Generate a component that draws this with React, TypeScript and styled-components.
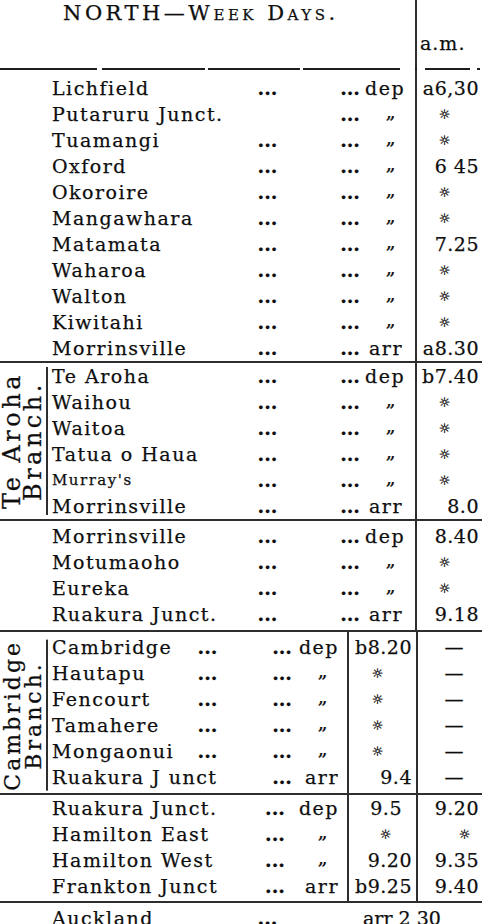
import styled, { createGlobalStyle } from "styled-components";

const GlobalStyle = createGlobalStyle`
  html, body {
    margin: 0;
    padding: 0;
    background: #fff;
  }
`;

type Layout = "main" | "cam" | "ham";

type Stop = {
  name: string;
  d1?: boolean;
  d2?: boolean;
  q: string;
  mid?: string;
  midPad?: number;
  time?: string;
  small?: boolean;
};

const STAR = "*";
const NONE = "—";

const columns: Record<Layout, string> = {
  main: "202px 35px 80px 50px 1fr",
  cam: "142px 35px 70px 52px 70px 1fr",
  ham: "207px 40px 52px 70px 1fr",
};

// where the stop marks sit in each column, as a right margin
const starRight: Record<Layout, { mid: number; time: number }> = {
  main: { mid: 0, time: 28 },
  cam: { mid: 28, time: 28 },
  ham: { mid: 20, time: 8 },
};

const northMain: Stop[] = [
  { name: "Lichfield", d1: true, d2: true, q: "dep", time: "a6,30" },
  { name: "Putaruru Junct.", d2: true, q: "„", time: STAR },
  { name: "Tuamangi", d1: true, d2: true, q: "„", time: STAR },
  { name: "Oxford", d1: true, d2: true, q: "„", time: "6 45" },
  { name: "Okoroire", d1: true, d2: true, q: "„", time: STAR },
  { name: "Mangawhara", d1: true, d2: true, q: "„", time: STAR },
  { name: "Matamata", d1: true, d2: true, q: "„", time: "7.25" },
  { name: "Waharoa", d1: true, d2: true, q: "„", time: STAR },
  { name: "Walton", d1: true, d2: true, q: "„", time: STAR },
  { name: "Kiwitahi", d1: true, d2: true, q: "„", time: STAR },
  { name: "Morrinsville", d1: true, d2: true, q: "arr", time: "a8.30" },
];

const teAroha: Stop[] = [
  { name: "Te Aroha", d1: true, d2: true, q: "dep", time: "b7.40" },
  { name: "Waihou", d1: true, d2: true, q: "„", time: STAR },
  { name: "Waitoa", d1: true, d2: true, q: "„", time: STAR },
  { name: "Tatua o Haua", d1: true, d2: true, q: "„", time: STAR },
  { name: "Murray's", d1: true, d2: true, q: "„", time: STAR, small: true },
  { name: "Morrinsville", d1: true, d2: true, q: "arr", time: "8.0" },
];

const toRuakura: Stop[] = [
  { name: "Morrinsville", d1: true, d2: true, q: "dep", time: "8.40" },
  { name: "Motumaoho", d1: true, d2: true, q: "„", time: STAR },
  { name: "Eureka", d1: true, d2: true, q: "„", time: STAR },
  { name: "Ruakura Junct.", d1: true, d2: true, q: "arr", time: "9.18" },
];

const cambridge: Stop[] = [
  { name: "Cambridge", d1: true, d2: true, q: "dep", mid: "b8.20", time: NONE },
  { name: "Hautapu", d1: true, d2: true, q: "„", mid: STAR, time: NONE },
  { name: "Fencourt", d1: true, d2: true, q: "„", mid: STAR, time: NONE },
  { name: "Tamahere", d1: true, d2: true, q: "„", mid: STAR, time: NONE },
  { name: "Mongaonui", d1: true, d2: true, q: "„", mid: STAR, time: NONE },
  { name: "Ruakura J unct", d2: true, q: "arr", mid: "9.4", time: NONE },
];

const hamilton: Stop[] = [
  { name: "Ruakura Junct.", d1: true, q: "dep", mid: "9.5", midPad: 15, time: "9.20" },
  { name: "Hamilton East", d1: true, q: "„", mid: STAR, time: STAR },
  { name: "Hamilton West", d1: true, q: "„", mid: "9.20", time: "9.35" },
  { name: "Frankton Junct", d1: true, q: "arr", mid: "b9.25", time: "9.40" },
];

// [start, end] of each piece of the broken rule under the heading
const headRule: [number, number][] = [
  [0, 97],
  [102, 205],
  [208, 300],
  [303, 400],
  [415, 417],
  [425, 470],
  [477, 480],
];

const Page = styled.div`
  width: 482px;
  height: 924px;
  overflow: hidden;
  background: #fff;
  color: #0e0e0e;
  font-family: "DejaVu Serif", "Liberation Serif", serif;
  font-size: 19px;
  -webkit-text-stroke: 0.25px #0e0e0e;
`;

const Header = styled.header`
  display: grid;
  grid-template-columns: 415px 1fr;
  height: 68px;
`;

const Title = styled.h1`
  margin: 0;
  padding: 1px 0 0 63px;
  font-size: 21px;
  font-weight: normal;
  font-variant: small-caps;
  letter-spacing: 3.5px;
  line-height: 24px;
  white-space: nowrap;
`;

const AmHead = styled.div`
  border-left: 2px solid #2e2e2e;
  padding: 30px 0 0 3px;
  line-height: 26px;
  letter-spacing: 1px;
`;

const HeadRule = styled.div`
  display: flex;
  height: 2px;
`;

const RuleBit = styled.span<{ $w: number; $gap: number }>`
  width: ${(p) => p.$w}px;
  margin-left: ${(p) => p.$gap}px;
  height: 2px;
  background: #1e1e1e;
`;

const Section = styled.section<{
  $rules: number[];
  $top?: boolean;
  $pt?: number;
  $pb?: number;
}>`
  display: flex;
  padding: ${(p) => p.$pt ?? 0}px 0 ${(p) => p.$pb ?? 0}px;
  border-top: ${(p) => (p.$top ? "2px solid #2e2e2e" : "none")};
  background-image: ${(p) =>
    p.$rules.length
      ? p.$rules.map(() => "linear-gradient(#2e2e2e, #2e2e2e)").join(", ")
      : "none"};
  background-repeat: no-repeat;
  background-size: 2px 100%;
  background-position: ${(p) => p.$rules.map((x) => `${x}px 0`).join(", ")};
`;

const Gutter = styled.div`
  flex: none;
  width: 48px;
`;

const BranchLabel = styled.div<{ $size: number; $spacing: number; $mt: number; $mb: number }>`
  flex: none;
  width: 44px;
  margin: ${(p) => p.$mt}px 0 ${(p) => p.$mb}px;
  padding-right: 2px;
  border-left: 2px solid #2e2e2e;
  writing-mode: vertical-rl;
  transform: rotate(180deg);
  text-align: center;
  font-size: ${(p) => p.$size}px;
  letter-spacing: ${(p) => p.$spacing}px;
  line-height: 21px;
  white-space: nowrap;
`;

const Rows = styled.div`
  flex: 1;
  display: flex;
  flex-direction: column;
`;

const Row = styled.div<{ $layout: Layout }>`
  display: grid;
  grid-template-columns: ${(p) => columns[p.$layout]};
  height: 26px;
  line-height: 26px;
  white-space: nowrap;
`;

const Name = styled.span<{ $small?: boolean }>`
  padding-left: 4px;
  letter-spacing: 1.5px;
  font-size: ${(p) => (p.$small ? 15 : 19)}px;
`;

const Dots = styled.span<{ $align: "center" | "right"; $pad?: number }>`
  text-align: ${(p) => p.$align};
  padding-right: ${(p) => p.$pad ?? 0}px;
  font-weight: bold;
`;

const Qual = styled.span<{ $pad: number }>`
  text-align: right;
  padding-right: ${(p) => p.$pad}px;
  letter-spacing: 1.5px;
`;

const Ditto = styled.span<{ $shift: number }>`
  display: inline-block;
  margin-right: ${(p) => p.$shift}px;
  position: relative;
  top: -3px;
`;

const Mid = styled.span<{ $pad?: number }>`
  text-align: right;
  padding-right: ${(p) => p.$pad ?? 5}px;
  letter-spacing: 0.5px;
`;

const Time = styled.span`
  text-align: right;
  padding-right: 3px;
  letter-spacing: 0.5px;
`;

const Star = styled.span<{ $right: number }>`
  display: inline-block;
  margin-right: ${(p) => p.$right}px;
  font-family: "DejaVu Sans", sans-serif;
  font-size: 13px;
  line-height: 1;
  vertical-align: 2px;
  color: #1a1a1a;
  -webkit-text-stroke: 0.4px #1a1a1a;
`;

const Dash = styled.span`
  display: inline-block;
  margin-right: 15px;
`;

const Arrival = styled.span`
  padding-left: 78px;
`;

function Value({ v, right }: { v?: string; right: number }) {
  if (!v) return null;
  if (v === STAR) return <Star $right={right}>☼</Star>;
  if (v === NONE) return <Dash>—</Dash>;
  return <>{v}</>;
}

function StopRow({ stop, layout }: { stop: Stop; layout: Layout }) {
  const marks = starRight[layout];
  const dots = "...";
  // qualifier column: padding, and how far a ditto mark sits left of it
  const q = layout === "main" ? { pad: 12, ditto: 6 } : { pad: 8, ditto: 10 };
  const qual = stop.q === "„" ? <Ditto $shift={q.ditto}>„</Ditto> : stop.q;

  return (
    <Row $layout={layout}>
      <Name $small={stop.small}>{stop.name}</Name>
      {layout === "ham" ? (
        <Dots $align="center">{stop.d1 ? dots : ""}</Dots>
      ) : (
        <>
          <Dots $align="center">{stop.d1 ? dots : ""}</Dots>
          <Dots $align="right" $pad={layout === "main" ? 5 : 3}>
            {stop.d2 ? dots : ""}
          </Dots>
        </>
      )}
      <Qual $pad={q.pad}>{qual}</Qual>
      {layout !== "main" && (
        <Mid $pad={stop.midPad}>
          <Value v={stop.mid} right={marks.mid} />
        </Mid>
      )}
      <Time>
        <Value v={stop.time} right={marks.time} />
      </Time>
    </Row>
  );
}

export default function App() {
  let x = 0;
  return (
    <Page>
      <GlobalStyle />
      <Header>
        <Title>NORTH—Week Days.</Title>
        <AmHead>a.m.</AmHead>
      </Header>
      <HeadRule>
        {headRule.map(([a, b]) => {
          const gap = a - x;
          x = b;
          return <RuleBit key={a} $w={b - a} $gap={gap} />;
        })}
      </HeadRule>

      <Section $rules={[415]} $pt={5}>
        <Gutter />
        <Rows>
          {northMain.map((s) => (
            <StopRow key={s.name} stop={s} layout="main" />
          ))}
        </Rows>
      </Section>

      <Section $rules={[415]} $top>
        <BranchLabel $size={24} $spacing={3.5} $mt={4} $mb={4}>
          Te Aroha
          <br />
          Branch.
        </BranchLabel>
        <Rows>
          {teAroha.map((s) => (
            <StopRow key={s.name + s.q} stop={s} layout="main" />
          ))}
        </Rows>
      </Section>

      <Section $rules={[415]} $top $pt={2} $pb={3}>
        <Gutter />
        <Rows>
          {toRuakura.map((s) => (
            <StopRow key={s.name} stop={s} layout="main" />
          ))}
        </Rows>
      </Section>

      <Section $rules={[347, 416]} $top $pt={2}>
        <BranchLabel $size={22} $spacing={3} $mt={6} $mb={2}>
          Cambridge
          <br />
          Branch.
        </BranchLabel>
        <Rows>
          {cambridge.map((s) => (
            <StopRow key={s.name} stop={s} layout="cam" />
          ))}
        </Rows>
      </Section>

      <Section $rules={[347, 416]} $top $pb={2}>
        <Gutter />
        <Rows>
          {hamilton.map((s) => (
            <StopRow key={s.name} stop={s} layout="ham" />
          ))}
        </Rows>
      </Section>

      <Section $rules={[]} $top $pt={2}>
        <Gutter />
        <Rows>
          <Row $layout="main">
            <Name>Auckland</Name>
            <Dots $align="center">...</Dots>
            <Arrival>arr 2 30</Arrival>
          </Row>
        </Rows>
      </Section>
    </Page>
  );
}
